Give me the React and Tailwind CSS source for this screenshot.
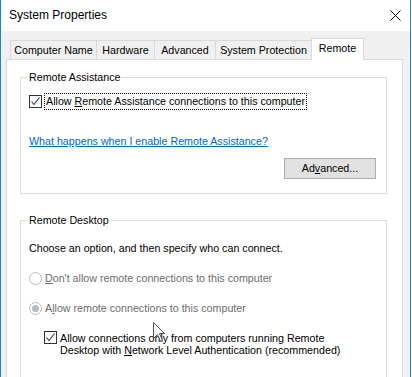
import React from "react";

function Check() {
  return (
    <span className="flex h-[13px] w-[13px] shrink-0 items-center justify-center border border-[#333333] bg-white">
      <svg width="11" height="11" viewBox="0 0 11 11">
        <path d="M1.5 5.5 L4 8.5 L9.5 1.5" fill="none" stroke="#333333" strokeWidth="1.1" />
      </svg>
    </span>
  );
}

function Radio({ on }) {
  return (
    <span className="flex h-[13px] w-[13px] shrink-0 items-center justify-center rounded-full border border-[#bcbcbc] bg-white">
      {on && <span className="h-[7px] w-[7px] rounded-full bg-[#bcbcbc]" />}
    </span>
  );
}

function Tab({ w, children, sel }) {
  if (sel)
    return (
      <div
        className={`relative z-10 -ml-px -mb-px flex h-[22px] items-center justify-center border border-b-0 border-[#d9d9d9] bg-white pb-[2px] ${w}`}
      >
        {children}
      </div>
    );
  return (
    <div
      className={`-ml-px flex h-[19px] items-center justify-center border border-b-0 border-[#d9d9d9] bg-[#f0f0f0] first:ml-0 ${w}`}
    >
      {children}
    </div>
  );
}

export default function App() {
  return (
    <div
      className="relative h-[377px] w-[412px] overflow-hidden bg-white text-[10.7px] leading-[13px] text-black"
      style={{ fontFamily: "'Liberation Sans', Arial, sans-serif" }}
    >
      <div className="flex h-full w-[411px] flex-col border-x border-[#1883d7]">
        {/* title bar */}
        <div className="flex h-[31px] shrink-0 items-center justify-between bg-white pl-[8px] pr-[9px]">
          <span className="text-[12px] text-black">System Properties</span>
          <svg width="11" height="11" viewBox="0 0 11 11">
            <path d="M0.5 0.5 L10.5 10.5 M10.5 0.5 L0.5 10.5" stroke="#000" strokeWidth="1" />
          </svg>
        </div>
        {/* body */}
        <div className="flex flex-1 flex-col bg-[#f0f0f0] pl-[5px] pt-[7px]">
          <div className="ml-[4px] flex items-end">
            <Tab w="w-[87px]">Computer Name</Tab>
            <Tab w="w-[59px]">Hardware</Tab>
            <Tab w="w-[62px]">Advanced</Tab>
            <Tab w="w-[97px]">System Protection</Tab>
            <Tab w="w-[53px]" sel>
              Remote
            </Tab>
          </div>
          <div className="flex-1 w-[397px] border border-[#d9d9d9] bg-white pl-[13px] pt-[11px]">
            {/* Remote Assistance */}
            <fieldset className="h-[123px] w-[367px] border border-[#dcdcdc] px-[8px]">
              <legend className="ml-[-2px] px-[2px] leading-[13px]">Remote Assistance</legend>
              <div className="mt-[9px] flex items-center">
                <Check />
                <span className="ml-[2px] border border-dotted border-black px-[1px] py-[1px] leading-[13px]">
                  Allow <span className="underline">R</span>emote Assistance connections to this computer
                </span>
              </div>
              <div className="mt-[25px] text-[#0066cc] underline">
                What happens when I enable Remote Assistance?
              </div>
              <div className="mt-[10px] flex justify-end pr-[2px]">
                <div className="flex h-[21px] w-[92px] items-center justify-center border border-[#adadad] bg-[#e1e1e1]">
                  Ad<span className="underline">v</span>anced...
                </div>
              </div>
            </fieldset>
            {/* Remote Desktop */}
            <fieldset className="mt-[20px] h-[200px] w-[367px] border border-[#dcdcdc] px-[8px]">
              <legend className="ml-[-2px] px-[2px] leading-[13px]">Remote Desktop</legend>
              <div className="mt-[15px]">Choose an option, and then specify who can connect.</div>
              <div className="mt-[17px] flex items-center text-[#6d6d6d]">
                <Radio />
                <span className="ml-[3px]">
                  <span className="underline">D</span>on't allow remote connections to this computer
                </span>
              </div>
              <div className="mt-[17px] flex items-center text-[#6d6d6d]">
                <Radio on />
                <span className="ml-[3px]">
                  A<span className="underline">l</span>low remote connections to this computer
                </span>
              </div>
              <div className="ml-[15px] mt-[17px] flex items-start">
                <div className="mt-[-1px]">
                  <Check />
                </div>
                <div className="ml-[3px] leading-[12px]">
                  Allow connections only from computers running Remote
                  <br />
                  Desktop with <span className="underline">N</span>etwork Level Authentication (recommended)
                </div>
              </div>
            </fieldset>
          </div>
        </div>
      </div>
      {/* mouse cursor */}
      <svg className="absolute left-[153px] top-[322px]" width="13" height="21" viewBox="0 0 13 21">
        <path
          d="M0.5 0.5 L0.5 16.5 L4.5 12.5 L7.5 19.5 L9.5 18.5 L6.5 11.5 L11.5 11.5 Z"
          fill="#ffffff"
          fillOpacity="0.85"
          stroke="#555555"
          strokeWidth="1"
        />
      </svg>
    </div>
  );
}
